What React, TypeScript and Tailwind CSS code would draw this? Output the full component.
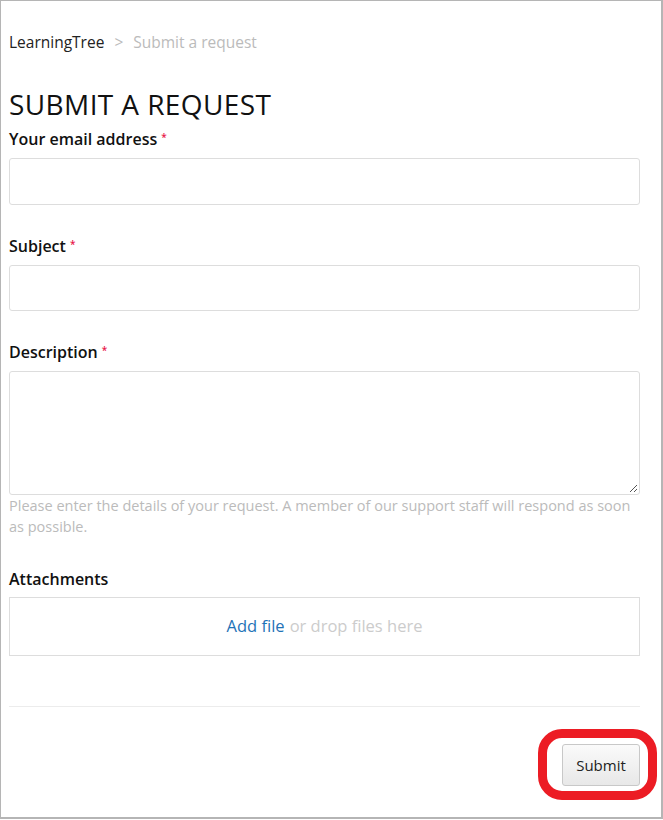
import React from "react";

function Label({ text, required }: { text: string; required?: boolean }) {
  return (
    <div className="h-[22px] text-[16px] leading-[22px] font-semibold text-[#111]">
      {text}
      {required && <span className="ml-[4px] align-top text-[10px] leading-[18px] text-[#e8174a]">*</span>}
    </div>
  );
}

export default function App() {
  return (
    <div className="w-[663px] h-[820px] bg-white" style={{ fontFamily: '"Open Sans", "DejaVu Sans", sans-serif' }}>
      <div className="relative h-[819px] w-[663px] border-t border-l border-r-2 border-b-2 border-[#b5b5b5] pl-[8px] pr-[21px] pt-[30px]">
        {/* Breadcrumb */}
        <div className="flex items-center h-[22px] text-[15.5px] leading-[22px]">
          <span className="text-[#222]">LearningTree</span>
          <span className="mx-[10px] text-[#bbb]">&gt;</span>
          <span className="text-[#bbb]">Submit a request</span>
        </div>

        {/* Heading */}
        <h1 className="mt-[34px] h-[34px] text-[28px] leading-[34px] font-normal text-[#111] tracking-[0.4px]">
          SUBMIT A REQUEST
        </h1>

        {/* Email */}
        <div className="mt-[7px]">
          <Label text="Your email address" required />
          <div className="mt-[8px] h-[47px] rounded-[3px] border border-[#ddd]" />
        </div>

        {/* Subject */}
        <div className="mt-[30px]">
          <Label text="Subject" required />
          <div className="mt-[8px] h-[46px] rounded-[3px] border border-[#ddd]" />
        </div>

        {/* Description */}
        <div className="mt-[30px]">
          <Label text="Description" required />
          <div className="relative mt-[8px] h-[124px] rounded-[3px] border border-[#ddd]">
            <svg className="absolute right-[1px] bottom-[1px]" width="10" height="10" viewBox="0 0 10 10">
              <path d="M9 2 L2 9 M9 6 L6 9" stroke="#555" strokeWidth="1" />
            </svg>
          </div>
          <p className="text-[14.5px] leading-[21px] text-[#bbb]">
            Please enter the details of your request. A member of our support staff will respond as soon as possible.
          </p>
        </div>

        {/* Attachments */}
        <div className="mt-[31px]">
          <Label text="Attachments" />
          <div className="mt-[7px] flex h-[59px] items-center justify-center border border-[#ddd] text-[16.5px]">
            <span className="text-[#1f73b7]">Add file</span>
            <span className="ml-[5px] text-[#ccc]">or drop files here</span>
          </div>
        </div>

        <div className="mt-[50px] h-px bg-[#ececec]" />

        {/* Submit */}
        <div className="mt-[37px] flex justify-end">
          <div className="relative">
            <button className="h-[42px] w-[78px] rounded-[3px] border border-[#c8c8c8] bg-gradient-to-b from-[#fafafa] to-[#e8e8e8] text-[15px] text-[#222]">
              Submit
            </button>
            <div className="absolute -left-[24px] -top-[15px] h-[71px] w-[119px] rounded-[24px] border-[9px] border-[#ec1c24]" />
          </div>
        </div>
      </div>
    </div>
  );
}
